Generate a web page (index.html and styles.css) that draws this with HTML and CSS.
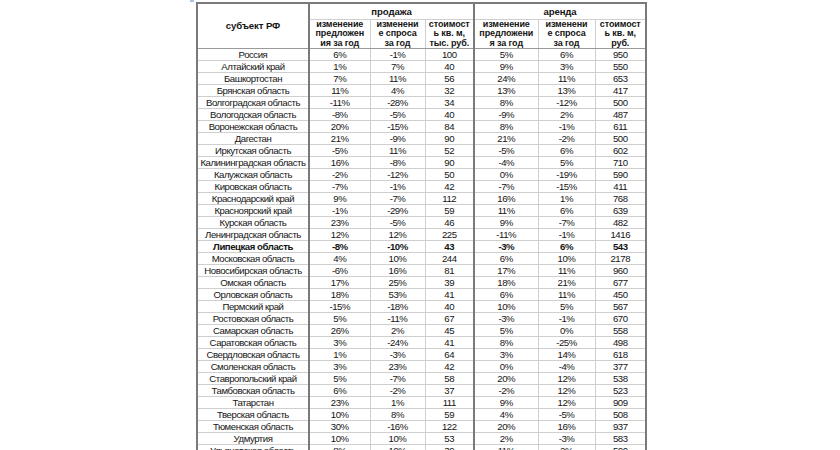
FILE: index.html
```html
<!DOCTYPE html>
<html lang="ru">
<head>
<meta charset="utf-8">
<title>Таблица</title>
<link rel="stylesheet" href="styles.css">
</head>
<body>
<div class="page">
  <div class="corner-mark"></div>
  <table class="grid">
    <colgroup>
      <col class="c-subj"><col class="c2"><col class="c3"><col class="c4"><col class="c5"><col class="c6"><col class="c7">
    </colgroup>
    <thead>
      <tr class="h1">
        <th rowspan="2" class="subj thick-r">субъект РФ</th>
        <th colspan="3" class="thick-r">продажа</th>
        <th colspan="3">аренда</th>
      </tr>
      <tr class="h2">
        <th>изменение<br>предложен<br>ия за год</th>
        <th>изменени<br>е спроса<br>за год</th>
        <th class="thick-r">стоимост<br>ь кв. м,<br>тыс. руб.</th>
        <th>изменение<br>предложени<br>я за год</th>
        <th>изменени<br>е спроса<br>за год</th>
        <th class="last">стоимост<br>ь кв. м,<br>руб.</th>
      </tr>
    </thead>
    <tbody>
      <tr><td class="thick-r">Россия</td><td>6%</td><td>-1%</td><td class="thick-r">100</td><td>5%</td><td>6%</td><td>950</td></tr>
      <tr><td class="thick-r">Алтайский край</td><td>1%</td><td>7%</td><td class="thick-r">40</td><td>9%</td><td>3%</td><td>550</td></tr>
      <tr><td class="thick-r">Башкортостан</td><td>7%</td><td>11%</td><td class="thick-r">56</td><td>24%</td><td>11%</td><td>653</td></tr>
      <tr><td class="thick-r">Брянская область</td><td>11%</td><td>4%</td><td class="thick-r">32</td><td>13%</td><td>13%</td><td>417</td></tr>
      <tr><td class="thick-r">Волгоградская область</td><td>-11%</td><td>-28%</td><td class="thick-r">34</td><td>8%</td><td>-12%</td><td>500</td></tr>
      <tr><td class="thick-r">Вологодская область</td><td>-8%</td><td>-5%</td><td class="thick-r">40</td><td>-9%</td><td>2%</td><td>487</td></tr>
      <tr><td class="thick-r">Воронежская область</td><td>20%</td><td>-15%</td><td class="thick-r">84</td><td>8%</td><td>-1%</td><td>611</td></tr>
      <tr><td class="thick-r">Дагестан</td><td>21%</td><td>-9%</td><td class="thick-r">90</td><td>21%</td><td>-2%</td><td>500</td></tr>
      <tr><td class="thick-r">Иркутская область</td><td>-5%</td><td>11%</td><td class="thick-r">52</td><td>-5%</td><td>6%</td><td>602</td></tr>
      <tr><td class="thick-r">Калининградская область</td><td>16%</td><td>-8%</td><td class="thick-r">90</td><td>-4%</td><td>5%</td><td>710</td></tr>
      <tr><td class="thick-r">Калужская область</td><td>-2%</td><td>-12%</td><td class="thick-r">50</td><td>0%</td><td>-19%</td><td>590</td></tr>
      <tr><td class="thick-r">Кировская область</td><td>-7%</td><td>-1%</td><td class="thick-r">42</td><td>-7%</td><td>-15%</td><td>411</td></tr>
      <tr><td class="thick-r">Краснодарский край</td><td>9%</td><td>-7%</td><td class="thick-r">112</td><td>16%</td><td>1%</td><td>768</td></tr>
      <tr><td class="thick-r">Красноярский край</td><td>-1%</td><td>-29%</td><td class="thick-r">59</td><td>11%</td><td>6%</td><td>639</td></tr>
      <tr><td class="thick-r">Курская область</td><td>23%</td><td>-5%</td><td class="thick-r">46</td><td>9%</td><td>-7%</td><td>482</td></tr>
      <tr><td class="thick-r">Ленинградская область</td><td>12%</td><td>12%</td><td class="thick-r">225</td><td>-11%</td><td>-1%</td><td>1416</td></tr>
      <tr class="bold"><td class="thick-r">Липецкая область</td><td>-8%</td><td>-10%</td><td class="thick-r">43</td><td>-3%</td><td>6%</td><td>543</td></tr>
      <tr><td class="thick-r">Московская область</td><td>4%</td><td>10%</td><td class="thick-r">244</td><td>6%</td><td>10%</td><td>2178</td></tr>
      <tr><td class="thick-r">Новосибирская область</td><td>-6%</td><td>16%</td><td class="thick-r">81</td><td>17%</td><td>11%</td><td>960</td></tr>
      <tr><td class="thick-r">Омская область</td><td>17%</td><td>25%</td><td class="thick-r">39</td><td>18%</td><td>21%</td><td>677</td></tr>
      <tr><td class="thick-r">Орловская область</td><td>18%</td><td>53%</td><td class="thick-r">41</td><td>6%</td><td>11%</td><td>450</td></tr>
      <tr><td class="thick-r">Пермский край</td><td>-15%</td><td>-18%</td><td class="thick-r">40</td><td>10%</td><td>5%</td><td>567</td></tr>
      <tr><td class="thick-r">Ростовская область</td><td>5%</td><td>-11%</td><td class="thick-r">67</td><td>-3%</td><td>-1%</td><td>670</td></tr>
      <tr><td class="thick-r">Самарская область</td><td>26%</td><td>2%</td><td class="thick-r">45</td><td>5%</td><td>0%</td><td>558</td></tr>
      <tr><td class="thick-r">Саратовская область</td><td>3%</td><td>-24%</td><td class="thick-r">41</td><td>8%</td><td>-25%</td><td>498</td></tr>
      <tr><td class="thick-r">Свердловская область</td><td>1%</td><td>-3%</td><td class="thick-r">64</td><td>3%</td><td>14%</td><td>618</td></tr>
      <tr><td class="thick-r">Смоленская область</td><td>3%</td><td>23%</td><td class="thick-r">42</td><td>0%</td><td>-4%</td><td>377</td></tr>
      <tr><td class="thick-r">Ставропольский край</td><td>5%</td><td>-7%</td><td class="thick-r">58</td><td>20%</td><td>12%</td><td>538</td></tr>
      <tr><td class="thick-r">Тамбовская область</td><td>6%</td><td>-2%</td><td class="thick-r">37</td><td>-2%</td><td>12%</td><td>523</td></tr>
      <tr><td class="thick-r">Татарстан</td><td>23%</td><td>1%</td><td class="thick-r">111</td><td>9%</td><td>12%</td><td>909</td></tr>
      <tr><td class="thick-r">Тверская область</td><td>10%</td><td>8%</td><td class="thick-r">59</td><td>4%</td><td>-5%</td><td>508</td></tr>
      <tr><td class="thick-r">Тюменская область</td><td>30%</td><td>-16%</td><td class="thick-r">122</td><td>20%</td><td>16%</td><td>937</td></tr>
      <tr><td class="thick-r">Удмуртия</td><td>10%</td><td>10%</td><td class="thick-r">53</td><td>2%</td><td>-3%</td><td>583</td></tr>
      <tr><td class="thick-r">Ульяновская область</td><td>8%</td><td>19%</td><td class="thick-r">39</td><td>11%</td><td>2%</td><td>500</td></tr>
    </tbody>
  </table>
</div>
</body>
</html>
```

FILE: styles.css
```css
html, body {
  margin: 0;
  padding: 0;
  background: #ffffff;
}

body {
  font-family: "Liberation Sans", Arial, sans-serif;
  color: #141414;
  overflow: hidden;
}

.page {
  position: relative;
  padding: 2px 0 0 196px;
}

.corner-mark {
  position: absolute;
  left: 190px;
  top: 0;
  width: 4px;
  height: 2px;
  background: #a9c2de;
}

.grid {
  border-collapse: collapse;
  table-layout: fixed;
  width: 450px;
  border: 2px solid #7a7a7a;
  font-size: 9.6px;
  letter-spacing: -0.45px;
}

.c-subj { width: 112px; }
.c2 { width: 61px; }
.c3 { width: 55px; }
.c4 { width: 49px; }
.c5 { width: 64px; }
.c6 { width: 57px; }
.c7 { width: 51px; }

.grid th,
.grid td {
  border: 1px solid #cfcfcf;
  padding: 0;
  text-align: center;
  vertical-align: middle;
  white-space: nowrap;
  overflow: hidden;
}

.grid th {
  font-weight: bold;
  color: #141414;
  letter-spacing: -0.1px;
}

.grid .thick-r {
  border-right: 2px solid #7a7a7a;
}

.h1 th {
  height: 15px;
  line-height: 12px;
  font-size: 9.6px;
}

.h1 th.subj {
  border-bottom: 1px solid #9a9a9a;
}

.h2 th {
  height: 27px;
  font-size: 9px;
  line-height: 9.4px;
  vertical-align: bottom;
  border-bottom: 1px solid #9a9a9a;
}

.grid td {
  height: 11px;
  line-height: 11px;
}

.grid tr.bold td {
  font-weight: bold;
}
```
